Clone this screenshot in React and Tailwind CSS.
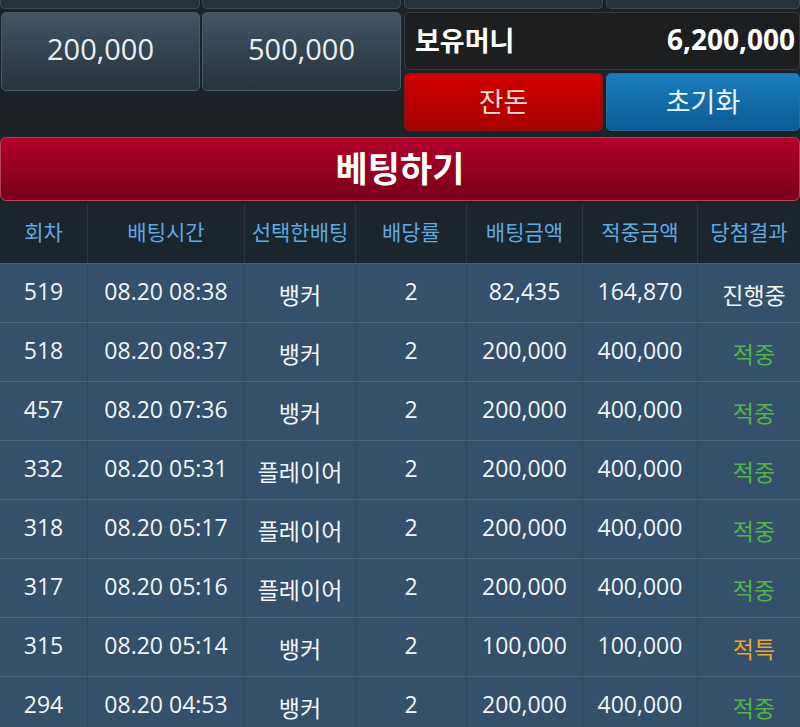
import React from "react";

const rows = [
  ["519", "08.20 08:38", "뱅커", "2", "82,435", "164,870", "진행중", "text-[#f2f2f2]"],
  ["518", "08.20 08:37", "뱅커", "2", "200,000", "400,000", "적중", "text-[#52b548]"],
  ["457", "08.20 07:36", "뱅커", "2", "200,000", "400,000", "적중", "text-[#52b548]"],
  ["332", "08.20 05:31", "플레이어", "2", "200,000", "400,000", "적중", "text-[#52b548]"],
  ["318", "08.20 05:17", "플레이어", "2", "200,000", "400,000", "적중", "text-[#52b548]"],
  ["317", "08.20 05:16", "플레이어", "2", "200,000", "400,000", "적중", "text-[#52b548]"],
  ["315", "08.20 05:14", "뱅커", "2", "100,000", "100,000", "적특", "text-[#f0a428]"],
  ["294", "08.20 04:53", "뱅커", "2", "200,000", "400,000", "적중", "text-[#52b548]"],
];

const cols = ["w-[88px]", "w-[157px]", "w-[111px]", "w-[111px]", "w-[116px]", "w-[115px]", "flex-1"];
const heads = ["회차", "배팅시간", "선택한배팅", "배당률", "배팅금액", "적중금액", "당첨결과"];

const font = { fontFamily: '"Open Sans", "Noto Sans CJK KR", sans-serif' };

function GreyBtn({ children, className }) {
  return (
    <div
      className={`flex items-center justify-center rounded-[5px] border border-[#4b5a67] bg-gradient-to-b from-[#435463] to-[#27333d] pb-[6px] text-[29px] text-[#e9eef2] ${className}`}
    >
      {children}
    </div>
  );
}

export default function App() {
  return (
    <div className="w-[800px] h-[727px] overflow-hidden bg-[#1c2227]" style={font}>
      <div className="flex">
        <div className="flex w-[402px] flex-col">
          <div className="flex h-[9px] gap-[2px] pr-[1px]">
            <div className="w-[200px] rounded-b-[5px] border border-t-0 border-[#3c4955] bg-[#27323b]" />
            <div className="flex-1 rounded-b-[5px] border border-t-0 border-[#3c4955] bg-[#27323b]" />
          </div>
          <div className="mt-[3px] flex h-[79px] gap-[2px] pl-[1px] pr-[1px]">
            <GreyBtn className="w-[199px]">200,000</GreyBtn>
            <GreyBtn className="flex-1">500,000</GreyBtn>
          </div>
        </div>
        <div className="ml-[2px] flex flex-1 flex-col">
          <div className="flex h-[9px] gap-[3px]">
            <div className="w-[199px] rounded-b-[5px] border border-t-0 border-[#3c4955] bg-[#27323b]" />
            <div className="flex-1 rounded-b-[5px] border border-t-0 border-[#3c4955] bg-[#27323b]" />
          </div>
          <div className="mt-[3px] flex h-[58px] items-center justify-between rounded-[5px] border border-[#363a3e] bg-[#1d1e1f] pl-[10px] pr-[4px]">
            <span className="text-[27px] font-bold text-white">보유머니</span>
            <span className="pb-[5px] text-[28px] font-bold text-white">6,200,000</span>
          </div>
          <div className="mt-[3px] flex h-[58px] gap-[3px]">
            <div className="flex w-[199px] items-center justify-center rounded-[5px] border border-[#7a1a1a] bg-gradient-to-b from-[#d20000] to-[#a60000] text-[27px] text-[#f6dada]">
              잔돈
            </div>
            <div className="flex flex-1 items-center justify-center rounded-[5px] border border-[#2a6d9c] bg-gradient-to-b from-[#1a7dbd] to-[#0b5c94] text-[27px] text-[#eef5fa]">
              초기화
            </div>
          </div>
        </div>
      </div>

      <div className="mt-[6px] flex h-[64px] items-center justify-center rounded-[6px] border border-[#b9405a] bg-gradient-to-b from-[#b4002a] to-[#78001a] text-[35px] font-bold text-white">
        베팅하기
      </div>

      <div className="mt-[2px]">
        <div className="flex h-[60px] bg-[#1b252d]">
          {heads.map((h, i) => (
            <div
              key={h}
              className={`${cols[i]} flex items-center justify-center border-r border-[#2b3640] text-[21px] text-[#5ea9e0] last:border-r-0`}
            >
              {h}
            </div>
          ))}
        </div>
        {rows.map((r) => (
          <div key={r[0]} className="flex h-[59px] border-t border-[#4a6479] bg-[#34506a]">
            {r.slice(0, 7).map((c, i) => (
              <div
                key={i}
                className={`${cols[i]} flex items-center justify-center border-r border-[#2d465c] text-[23px] last:border-r-0 ${
                  i === 6 ? `${r[7]} pl-[10px]` : "text-[#f2f4f6]"
                } ${i === 2 || i === 6 ? "pt-[5px]" : "pb-[4px]"}`}
              >
                {c}
              </div>
            ))}
          </div>
        ))}
      </div>
    </div>
  );
}
